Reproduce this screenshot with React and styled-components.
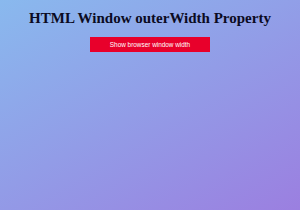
import React from "react";
import styled, { createGlobalStyle } from "styled-components";

const Global = createGlobalStyle`
  html, body { margin: 0; padding: 0; height: 100%; }
  body {
    background: linear-gradient(150deg, #89b9ee 0%, #9b7fe0 100%);
    min-height: 210px;
  }
`;

const Page = styled.div`
  display: flex;
  flex-direction: column;
  align-items: center;
  padding-top: 8px;
  height: 210px;
  box-sizing: border-box;
`;

const Title = styled.h1`
  margin: 0;
  font-family: "Liberation Serif", "Times New Roman", serif;
  font-weight: bold;
  font-size: 15px;
  line-height: 20px;
  color: #0b0b22;
`;

const Button = styled.button`
  margin-top: 9px;
  width: 120px;
  height: 15px;
  border: none;
  background: #e8002b;
  color: #fff;
  font-family: "Liberation Sans", Arial, sans-serif;
  font-size: 6.4px;
  padding: 0;
`;

export default function App() {
  return (
    <>
      <Global />
      <Page>
        <Title>HTML Window outerWidth Property</Title>
        <Button>Show browser window width</Button>
      </Page>
    </>
  );
}
